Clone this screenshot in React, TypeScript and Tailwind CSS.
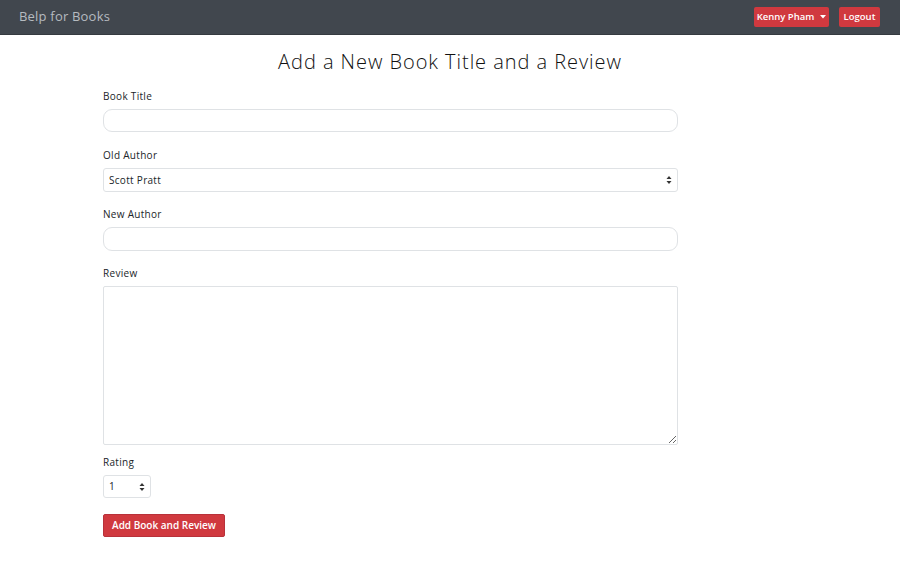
import { useState } from 'react';

function UpDown() {
  return (
    <svg width="6" height="9" viewBox="0 0 6 9" className="pointer-events-none absolute top-1/2 -translate-y-1/2 right-[6px]">
      <path d="M3 0.5 L5.5 3.5 H0.5 Z" fill="#333" />
      <path d="M3 8.5 L5.5 5.5 H0.5 Z" fill="#333" />
    </svg>
  );
}

export default function App() {
  const [rating, setRating] = useState('1');
  const font = { fontFamily: '"Open Sans", "Noto Sans", Arial, sans-serif' };

  return (
    <div className="min-h-[563px] bg-white text-[#212529]" style={font}>
      <nav className="h-[35px] bg-[#41474e] border-b border-[#353a40] flex items-center justify-between pl-[19px] pr-[20px]">
        <span className="text-[13px] text-[#b6bbc0] tracking-[0.2px]">Belp for Books</span>
        <div className="flex items-center gap-[10px]">
          <button className="h-[20px] w-[75px] rounded-[2px] bg-[#d0393f] text-white text-[9.5px] font-semibold flex items-center justify-center gap-[6px]">
            Kenny Pham
            <svg width="6" height="4" viewBox="0 0 6 4"><path d="M0 0 H6 L3 3.5 Z" fill="#fff" /></svg>
          </button>
          <button className="h-[20px] w-[41px] rounded-[2px] bg-[#d0393f] text-white text-[9.5px] font-semibold">
            Logout
          </button>
        </div>
      </nav>

      <h1 className="text-center text-[20px] font-light text-[#111] tracking-[0.95px] mt-[14px] leading-[26px]">
        Add a New Book Title and a Review
      </h1>

      <form className="w-[575px] ml-[103px] mt-[14px] flex flex-col text-[10px] tracking-[0.3px]">
        <label className="leading-[14px] mb-[6px]">Book Title</label>
        <input className="h-[23px] rounded-[9px] border border-[#dfe2e5] mb-[16px] px-[6px] outline-none" />

        <label className="leading-[14px] mb-[6px]">Old Author</label>
        <div className="relative mb-[15px]">
          <select className="appearance-none w-full h-[24px] rounded-[3px] border border-[#dfe2e5] px-[5px] text-[10px] bg-white outline-none">
            <option>Scott Pratt</option>
          </select>
          <UpDown />
        </div>

        <label className="leading-[14px] mb-[6px]">New Author</label>
        <input className="h-[24px] rounded-[9px] border border-[#dfe2e5] mb-[15px] px-[6px] outline-none" />

        <label className="leading-[14px] mb-[6px]">Review</label>
        <textarea className="h-[159px] rounded-[2px] border border-[#dfe2e5] mb-[10px] p-[6px] outline-none" />

        <label className="leading-[14px] mb-[6px]">Rating</label>
        <div className="relative w-[48px] mb-[16px]">
          <select
            value={rating}
            onChange={(e) => setRating(e.target.value)}
            className="appearance-none w-full h-[23px] rounded-[3px] border border-[#dfe2e5] px-[5px] text-[10px] bg-white outline-none"
          >
            {['1', '2', '3', '4', '5'].map((n) => (
              <option key={n}>{n}</option>
            ))}
          </select>
          <UpDown />
        </div>

        <div>
          <button type="button" className="h-[23px] w-[122px] rounded-[2px] bg-[#d0393f] border border-[#b8313a] text-white text-[10px] font-semibold tracking-normal">
            Add Book and Review
          </button>
        </div>
      </form>
    </div>
  );
}
